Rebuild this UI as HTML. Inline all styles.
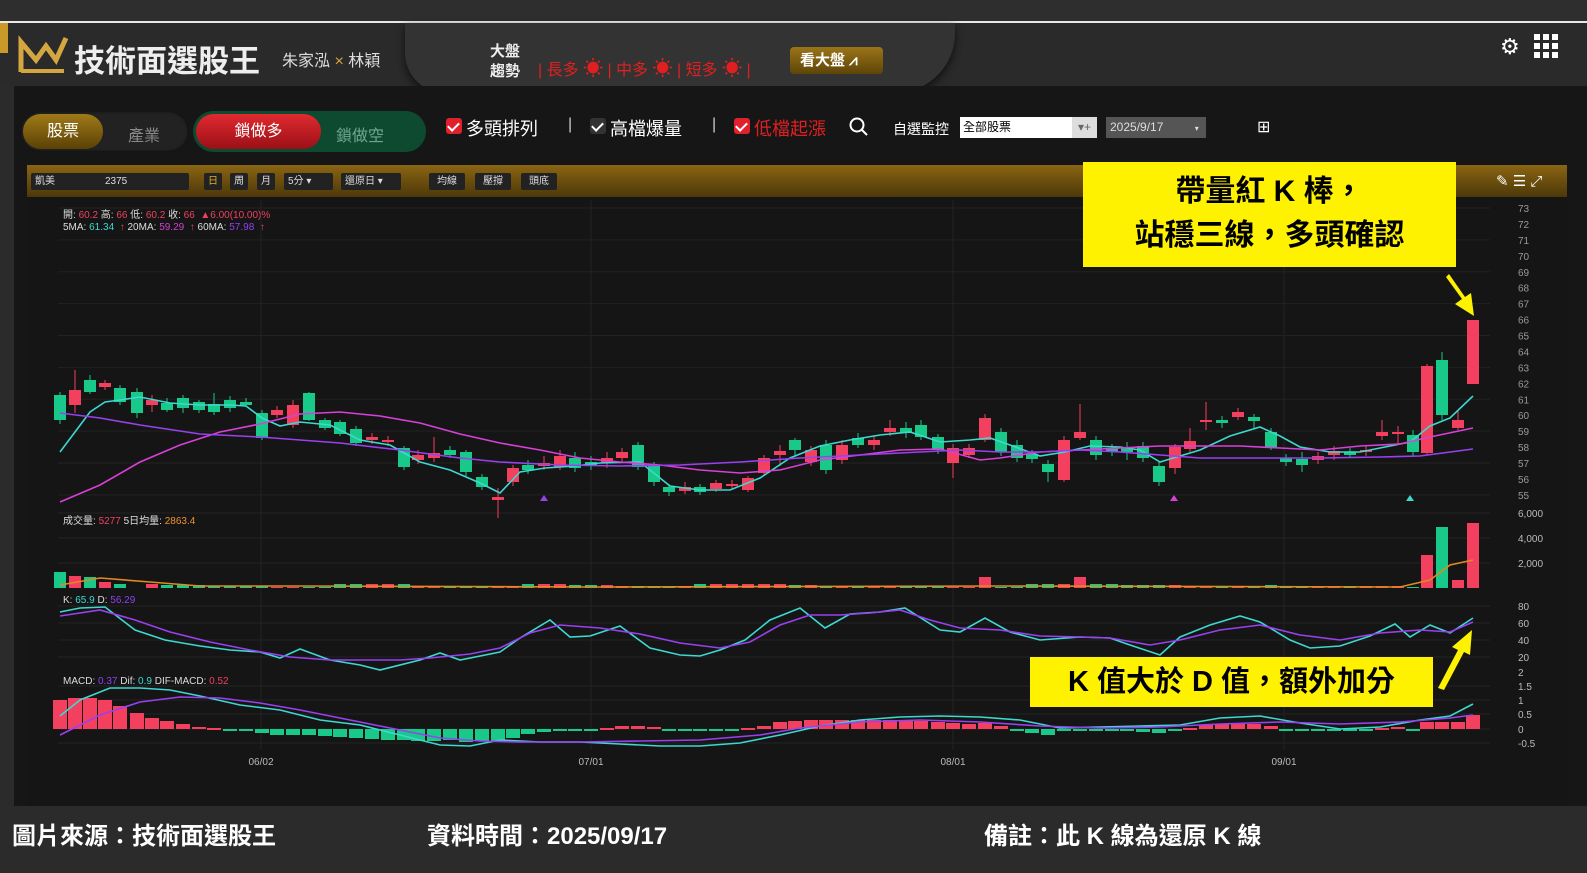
<!DOCTYPE html>
<html><head><meta charset="utf-8"><style>
*{margin:0;padding:0;box-sizing:border-box}
body{width:1587px;height:873px;background:#2b2b2b;position:relative;overflow:hidden;font-family:"Liberation Sans","Noto Sans CJK TC",sans-serif;color:#fff}
.abs{position:absolute}
.cb{position:absolute;width:16px;height:16px;border-radius:3px;background:#e0202a;top:118px}
.cb::after{content:"";position:absolute;left:4px;top:2px;width:5px;height:9px;border:solid #fff;border-width:0 2px 2px 0;transform:rotate(45deg)}
.tb{position:absolute;top:173px;height:17px;background:#222;color:#ddd;font-size:10px;line-height:17px;padding:0 4px;border-radius:2px}
.ax{position:absolute;left:1518px;font-size:10px;color:#999}
</style></head><body>
<div class="abs" style="left:0;top:0;width:1587px;height:21px;background:#2e2e2e"></div>
<div class="abs" style="left:0;top:21px;width:1587px;height:2px;background:#e8e8e8"></div>
<div class="abs" style="left:0;top:23px;width:1587px;height:63px;background:#2a2a2a"></div>
<div class="abs" style="left:405px;top:23px;width:550px;height:70px;background:#333;border-radius:0 0 60px 40px;box-shadow:0 4px 8px #111"></div>
<div class="abs" style="left:0;top:86px;width:1587px;height:720px;background:#161616"></div>
<div class="abs" style="left:0;top:86px;width:14px;height:720px;background:#2b2b2b"></div>
<div class="abs" style="left:0;top:23px;width:8px;height:30px;background:#c99a2a"></div>
<svg class="abs" style="left:18px;top:34px" width="52" height="40" viewBox="0 0 52 40"><path d="M3 38 V8 L18 26 L28 12 L38 26 L48 4" fill="none" stroke="#d4a640" stroke-width="5"/><path d="M3 37 H46" stroke="#d4a640" stroke-width="4"/></svg>
<div class="abs" style="left:74px;top:36px;font-size:31px;font-weight:bold;color:#eee">技術面選股王</div>
<div class="abs" style="left:282px;top:47px;font-size:16px;color:#ddd">朱家泓 <span style="color:#d4a640">×</span> 林穎</div>
<div class="abs" style="left:490px;top:42px;font-size:15px;line-height:20px;font-weight:bold;color:#eee">大盤<br>趨勢</div>
<div class="abs" style="left:538px;top:52px;font-size:16px;color:#e02020;white-space:pre">| 長多 <b style="font-size:20px">☀</b> | 中多 <b style="font-size:20px">☀</b> | 短多 <b style="font-size:20px">☀</b> |</div>
<div class="abs" style="left:790px;top:47px;width:93px;height:27px;border-radius:4px;background:linear-gradient(#9a7418,#5e4508);font-size:15px;font-weight:bold;line-height:27px;padding-left:10px;color:#fff">看大盤 ⩘</div>
<div class="abs" style="left:1500px;top:34px;font-size:22px;color:#fff">⚙</div>
<svg class="abs" style="left:1534px;top:34px" width="24" height="24"><g fill="#fff"><rect x="0" y="0" width="6" height="6"/><rect x="9" y="0" width="6" height="6"/><rect x="18" y="0" width="6" height="6"/><rect x="0" y="9" width="6" height="6"/><rect x="9" y="9" width="6" height="6"/><rect x="18" y="9" width="6" height="6"/><rect x="0" y="18" width="6" height="6"/><rect x="9" y="18" width="6" height="6"/><rect x="18" y="18" width="6" height="6"/></g></svg>
<!-- toolbar -->
<div class="abs" style="left:20px;top:111px;width:169px;height:41px;border-radius:21px;background:#222;box-shadow:inset 0 0 3px #000"></div>
<div class="abs" style="left:23px;top:114px;width:80px;height:35px;border-radius:18px;background:linear-gradient(#a07a18,#5a4206);font-size:16px;line-height:35px;text-align:center;color:#fff">股票</div>
<div class="abs" style="left:128px;top:122px;font-size:16px;color:#888">產業</div>
<div class="abs" style="left:193px;top:111px;width:233px;height:41px;border-radius:21px;background:#0e4a30"></div>
<div class="abs" style="left:196px;top:114px;width:125px;height:35px;border-radius:18px;background:linear-gradient(#e02a30,#9a1016);font-size:16px;line-height:35px;text-align:center;color:#fff">鎖做多</div>
<div class="abs" style="left:336px;top:122px;font-size:16px;color:#6fa88c">鎖做空</div>
<div class="cb" style="left:446px"></div><div class="abs" style="left:466px;top:115px;font-size:18px;color:#fff">多頭排列</div>
<div class="abs" style="left:568px;top:116px;font-size:16px;color:#ccc">|</div>
<div class="cb" style="left:590px;background:#333"></div><div class="abs" style="left:610px;top:115px;font-size:18px;color:#fff">高檔爆量</div>
<div class="abs" style="left:712px;top:116px;font-size:16px;color:#ccc">|</div>
<div class="cb" style="left:734px"></div><div class="abs" style="left:754px;top:115px;font-size:18px;color:#e02020">低檔起漲</div>
<svg class="abs" style="left:849px;top:117px" width="20" height="20"><circle cx="8" cy="8" r="6.5" fill="none" stroke="#fff" stroke-width="2"/><path d="M13 13 L18 18" stroke="#fff" stroke-width="2"/></svg>
<div class="abs" style="left:893px;top:119px;font-size:14px;color:#fff">自選監控</div>
<div class="abs" style="left:960px;top:117px;width:137px;height:21px;background:#fff;color:#000;font-size:12px;line-height:21px;padding-left:3px">全部股票<span style="position:absolute;left:112px;top:0;width:25px;height:21px;background:#ddd;color:#666;text-align:center">▾+</span></div>
<div class="abs" style="left:1106px;top:117px;width:100px;height:21px;background:#555;color:#ddd;font-size:12px;line-height:21px;padding-left:4px">2025/9/17 <span style="margin-left:28px;font-size:8px">▾</span></div>
<div class="abs" style="left:1257px;top:117px;font-size:16px;color:#fff">⊞</div>
<!-- chart frame -->
<div class="abs" style="left:27px;top:165px;width:1540px;height:32px;background:linear-gradient(#8a6512,#4d380a)"></div>
<div class="tb" style="left:31px;width:158px">凱美<span style="margin-left:50px">2375</span></div>
<div class="tb" style="left:204px;color:#e0b020">日</div><div class="tb" style="left:230px">周</div><div class="tb" style="left:257px">月</div>
<div class="tb" style="left:284px;width:49px">5分 ▾</div><div class="tb" style="left:341px;width:60px">還原日 ▾</div>
<div class="tb" style="left:429px;width:36px;text-align:center">均線</div><div class="tb" style="left:475px;width:36px;text-align:center">壓撐</div><div class="tb" style="left:521px;width:36px;text-align:center">頭底</div>
<div class="abs" style="left:1496px;top:172px;font-size:15px;color:#fff">✎ ☰ ⤢</div>
<div class="abs" style="left:27px;top:197px;width:1540px;height:608px;background:#151515"></div>
<div class="abs" style="left:63px;top:210px;font-size:10px;color:#ddd;line-height:12px;white-space:pre">開: <span style="color:#f04060">60.2</span> 高: <span style="color:#f04060">66</span> 低: <span style="color:#f04060">60.2</span> 收: <span style="color:#f04060">66</span>  <span style="color:#f04060">▲6.00(10.00)%</span>
5MA: <span style="color:#3dd8d0">61.34</span>  <span style="color:#f04060">↑</span> 20MA: <span style="color:#d040d0">59.29</span>  <span style="color:#f04060">↑</span> 60MA: <span style="color:#9040f0">57.98</span>  <span style="color:#f04060">↑</span></div>
<div class="abs" style="left:63px;top:512px;font-size:10px;color:#ddd">成交量: <span style="color:#f04060">5277</span>  5日均量: <span style="color:#f09030">2863.4</span></div>
<div class="abs" style="left:63px;top:595px;font-size:10px;color:#ddd">K: <span style="color:#3dd8d0">65.9</span> D: <span style="color:#9040f0">56.29</span></div>
<div class="abs" style="left:63px;top:676px;font-size:10px;color:#ddd">MACD: <span style="color:#9040f0">0.37</span> Dif: <span style="color:#3dd8d0">0.9</span> DIF-MACD: <span style="color:#f04060">0.52</span></div>
<svg id="ch" class="abs" style="left:0;top:0" width="1587" height="873"></svg>
<div id="axes"></div>
<!-- annotations -->
<div class="abs" style="left:1083px;top:162px;width:373px;height:105px;background:#fff200;color:#000;font-size:30px;font-weight:bold;text-align:center;line-height:44px;padding-top:8px">帶量紅 K 棒，<br>站穩三線，多頭確認</div>
<svg class="abs" style="left:0;top:0" width="1587" height="873"><path d="M1446 277 L1462 299 L1455 304 L1474 316 L1471 293 L1465 297 L1449 274Z" fill="#fff200"/><path d="M1438 688 L1458 650 L1452 647 L1472 630 L1470 655 L1464 652 L1444 690Z" fill="#fff200"/></svg>
<div class="abs" style="left:1030px;top:657px;width:403px;height:50px;background:#fff200;color:#000;font-size:29px;font-weight:bold;text-align:center;line-height:50px">K 值大於 D 值，額外加分</div>
<div class="abs" style="left:12px;top:816px;font-size:24px;font-weight:bold;color:#fff">圖片來源：技術面選股王</div>
<div class="abs" style="left:427px;top:816px;font-size:24px;font-weight:bold;color:#fff">資料時間：2025/09/17</div>
<div class="abs" style="left:984px;top:816px;font-size:24px;font-weight:bold;color:#fff">備註：此 K 線為還原 K 線</div>
<script>
var s='',R='#f2405e',G='#18c98a';
function py(p){return 208+(73-p)*15.94}
// grid
for(var p=55;p<=73;p+=2){s+='<line x1="58" x2="1490" y1="'+py(p)+'" y2="'+py(p)+'" stroke="#222"/>';}
[513,538,563,606,623,640,657,686,700,714,729,743].forEach(function(y){s+='<line x1="58" x2="1490" y1="'+y+'" y2="'+y+'" stroke="#222"/>'});
[261,591,953,1284].forEach(function(x){s+='<line x1="'+x+'" x2="'+x+'" y1="200" y2="750" stroke="#232323"/>'});
var c=[[60,'G',395,420,392,424],[75,'R',390,405,370,413],[90,'G',380,392,375,394],[105,'R',383,387,380,390],[120,'G',388,402,385,405],[137,'G',392,413,388,418],[152,'R',400,405,395,412],[167,'G',403,410,398,412],[183,'G',398,408,395,413],[199,'G',402,410,400,413],[214,'G',404,412,393,415],[230,'G',400,408,396,412],[246,'G',402,405,398,407],[262,'G',413,438,410,440],[277,'R',410,415,406,418],[293,'R',405,425,400,428],[309,'G',393,420,392,421],[325,'G',420,428,418,430],[340,'G',422,434,420,436],[356,'G',429,443,426,446],[372,'R',437,440,433,444],[388,'R',440,442,436,446],[404,'G',448,467,446,470],[418,'R',455,460,450,464],[434,'R',453,458,437,462],[450,'G',450,455,446,458],[466,'G',452,472,450,476],[482,'G',477,487,474,490],[498,'R',497,500,488,518],[513,'R',468,482,465,486],[528,'G',465,470,460,474],[544,'R',463,466,456,470],[560,'R',456,467,450,470],[575,'G',458,468,452,472],[591,'G',462,466,456,470],[607,'R',458,463,452,468],[622,'R',452,458,448,462],[638,'G',445,467,442,470],[654,'G',466,482,462,486],[669,'G',487,492,484,496],[685,'R',487,491,482,494],[700,'G',487,492,484,495],[716,'R',483,489,480,492],[732,'R',484,486,480,490],[748,'R',478,490,476,492],[764,'R',458,473,455,476],[780,'R',451,455,445,466],[795,'G',440,450,438,456],[811,'R',450,462,446,466],[826,'G',445,470,440,474],[842,'R',445,460,440,464],[858,'G',438,445,433,448],[874,'R',440,445,436,450],[890,'R',428,432,420,436],[906,'G',428,433,422,438],[921,'G',425,437,420,440],[938,'G',437,450,434,454],[953,'R',448,463,444,478],[969,'R',448,455,444,458],[985,'R',418,440,414,442],[1001,'G',432,452,428,456],[1017,'G',445,458,440,462],[1032,'G',454,459,450,463],[1048,'G',464,472,460,482],[1064,'R',440,480,436,482],[1080,'R',432,438,404,440],[1096,'G',440,455,436,460],[1112,'G',448,452,444,456],[1127,'G',447,452,442,460],[1143,'G',446,458,442,462],[1159,'G',466,482,462,486],[1175,'R',447,468,444,474],[1190,'R',441,449,428,452],[1206,'R',420,422,402,430],[1222,'G',420,423,416,428],[1238,'R',412,417,408,420],[1254,'G',417,421,414,428],[1271,'G',432,447,428,450],[1286,'G',458,462,454,466],[1302,'G',459,465,452,472],[1318,'R',456,460,452,464],[1334,'R',451,455,446,460],[1350,'G',452,455,448,458],[1366,'R',450,452,446,456],[1382,'R',432,436,420,440],[1398,'R',432,434,426,445],[1413,'G',435,452,430,456],[1427,'R',366,453,364,455],[1442,'G',360,415,352,420],[1458,'R',420,428,410,430],[1473,'R',320,384,320,384]];
c.forEach(function(k){var col=k[1]=='R'?R:G;s+='<line x1="'+k[0]+'" x2="'+k[0]+'" y1="'+k[4]+'" y2="'+k[5]+'" stroke="'+col+'"/><rect x="'+(k[0]-6)+'" y="'+k[2]+'" width="12" height="'+Math.max(2,k[3]-k[2])+'" fill="'+col+'"/>';
 var v=(k[0]<140)?[572,576,577,582,584][c.indexOf(k)]:584+((k[0]*7)%4);
 if(k[0]==1427)v=555;if(k[0]==1442)v=527;if(k[0]==1473)v=523;if(k[0]==1458)v=580;if(k[0]==985||k[0]==1080)v=577;
 s+='<rect x="'+(k[0]-6)+'" y="'+v+'" width="12" height="'+(588-v)+'" fill="'+col+'"/>';});
function pl(a,col){s+='<polyline fill="none" stroke="'+col+'" stroke-width="1.6" points="'+a.map(function(p){return p.join(',')}).join(' ')+'"/>';}
pl([[60,452],[75,432],[90,412],[105,402],[120,400],[140,397],[170,403],[200,405],[230,405],[246,406],[262,418],[280,426],[300,422],[330,425],[360,440],[390,445],[420,462],[450,470],[480,483],[500,493],[520,472],[545,468],[575,466],[600,463],[640,462],[670,486],[700,490],[730,490],[760,478],[790,458],[820,446],[850,440],[880,435],[910,432],[940,442],[970,440],[990,438],[1010,445],[1040,456],[1065,452],[1090,446],[1120,447],[1140,450],[1160,462],[1180,456],[1200,450],[1230,436],[1260,427],[1280,436],[1300,447],[1330,452],[1360,452],[1390,446],[1410,442],[1430,426],[1450,418],[1473,396]],'#3dd8d0');
pl([[60,502],[100,485],[140,462],[180,445],[220,432],[260,424],[300,414],[340,412],[380,416],[420,423],[460,434],[500,443],[540,450],[580,458],[620,462],[660,465],[700,470],[740,473],[780,470],[820,460],[860,455],[900,450],[940,449],[980,460],[1000,458],[1040,452],[1080,450],[1120,448],[1160,446],[1200,446],[1240,446],[1280,448],[1320,450],[1360,446],[1400,444],[1430,437],[1473,428]],'#d840d8');
pl([[60,413],[100,418],[140,425],[200,434],[260,437],[300,440],[340,443],[400,450],[460,458],[500,462],[560,465],[620,466],[680,465],[740,462],[800,458],[860,455],[900,453],[960,450],[1000,452],[1040,452],[1080,450],[1120,452],[1160,455],[1200,458],[1260,458],[1320,458],[1380,457],[1420,456],[1473,449]],'#9a40f0');
pl([[60,585],[100,578],[150,582],[200,586],[300,586],[600,587],[1000,586],[1400,587],[1430,580],[1450,565],[1473,560]],'#e08a20');
pl([[60,612],[80,608],[105,607],[135,630],[165,640],[200,646],[230,650],[260,652],[280,658],[300,649],[330,660],[360,665],[380,670],[420,660],[440,653],[460,660],[500,652],[520,638],[550,620],[570,637],[590,636],[620,626],[650,648],[680,655],[700,656],[720,650],[745,640],[770,620],[800,608],[825,628],[850,614],[880,612],[905,608],[940,630],[960,632],[985,618],[1010,632],[1040,640],[1080,637],[1110,638],[1130,645],[1160,655],[1180,637],[1210,625],[1240,616],[1260,622],[1290,640],[1310,648],[1340,646],[1370,636],[1395,624],[1410,637],[1430,625],[1450,633],[1473,618]],'#3dd8d0');
pl([[60,616],[100,610],[135,620],[170,632],[210,642],[250,650],[290,657],[330,660],[360,660],[400,660],[430,658],[470,654],[500,648],[530,633],[560,625],[600,628],[640,634],[680,643],[720,648],[750,642],[780,625],[810,615],[840,615],[870,613],[900,610],[930,620],[960,628],[1000,630],[1040,636],[1080,637],[1110,638],[1150,645],[1180,640],[1220,630],[1260,625],[1300,635],[1340,640],[1380,633],[1420,630],[1450,632],[1473,622]],'#9a40f0');
var hist=[[60,700],[75,698],[90,698],[105,700],[120,706],[137,713],[152,718],[167,721],[183,724],[199,727],[214,728],[230,730],[246,730],[262,733],[277,735],[293,735],[309,735],[325,736],[340,737],[356,738],[372,739],[388,740],[404,740],[418,741],[434,741],[450,740],[466,742],[482,741],[498,742],[513,738],[528,734],[544,732],[560,730],[575,730],[591,729],[607,728],[622,726],[638,726],[654,727],[669,729],[685,730],[700,730],[716,730],[732,730],[748,728],[764,726],[780,722],[795,721],[811,720],[826,720],[842,720],[858,720],[874,720],[890,720],[906,720],[921,721],[938,722],[953,723],[969,724],[985,723],[1001,726],[1017,729],[1032,733],[1048,735],[1064,731],[1080,729],[1096,730],[1112,731],[1127,731],[1143,732],[1159,733],[1175,731],[1190,728],[1206,725],[1222,724],[1238,723],[1254,724],[1271,726],[1286,729],[1302,731],[1318,731],[1334,731],[1350,730],[1366,729],[1382,728],[1398,727],[1413,729],[1427,722],[1442,722],[1458,722],[1473,715]];
hist.forEach(function(h){var col=h[1]<729?R:G;var y=Math.min(h[1],729),hh=Math.max(2,Math.abs(h[1]-729));s+='<rect x="'+(h[0]-7)+'" y="'+y+'" width="14" height="'+hh+'" fill="'+col+'"/>';});
pl([[60,716],[80,700],[110,688],[140,688],[170,690],[200,696],[240,705],[280,710],[320,720],[360,725],[400,735],[440,745],[470,746],[500,740],[540,742],[580,742],[620,744],[660,746],[700,746],[740,743],[780,735],[820,726],[860,720],[900,717],[940,716],[980,717],[1020,720],[1060,728],[1100,727],[1140,726],[1180,725],[1220,718],[1260,716],[1300,723],[1340,729],[1380,727],[1420,720],[1450,716],[1473,704]],'#3dd8d0');
pl([[60,735],[100,715],[140,702],[180,697],[220,698],[260,703],[300,710],[350,720],[400,730],[440,738],[480,741],[520,742],[580,742],[640,741],[700,740],[760,735],[800,728],[860,722],[920,720],[980,722],[1040,726],[1100,728],[1160,727],[1220,724],[1280,722],[1340,724],[1400,722],[1450,718],[1473,715]],'#9a40f0');
s+='<path d="M544 495 l4 6 h-8z" fill="#9a40f0"/><path d="M1174 495 l4 6 h-8z" fill="#d840d8"/><path d="M1410 495 l4 6 h-8z" fill="#3dd8d0"/>';
var t='';for(var p=55;p<=73;p++)t+='<text x="1518" y="'+(py(p)+4)+'" fill="#999" font-size="10">'+p+'</text>';
[[513,'6,000'],[538,'4,000'],[563,'2,000'],[606,'80'],[623,'60'],[640,'40'],[657,'20'],[672,'2'],[686,'1.5'],[700,'1'],[714,'0.5'],[729,'0'],[743,'-0.5']].forEach(function(a){t+='<text x="1518" y="'+(a[0]+4)+'" fill="#bbb" font-size="10">'+a[1]+'</text>'});
[[261,'06/02'],[591,'07/01'],[953,'08/01'],[1284,'09/01']].forEach(function(a){t+='<text x="'+a[0]+'" y="765" fill="#bbb" font-size="10" text-anchor="middle">'+a[1]+'</text>'});
document.getElementById('ch').innerHTML=s+t;
</script>
</body></html>
